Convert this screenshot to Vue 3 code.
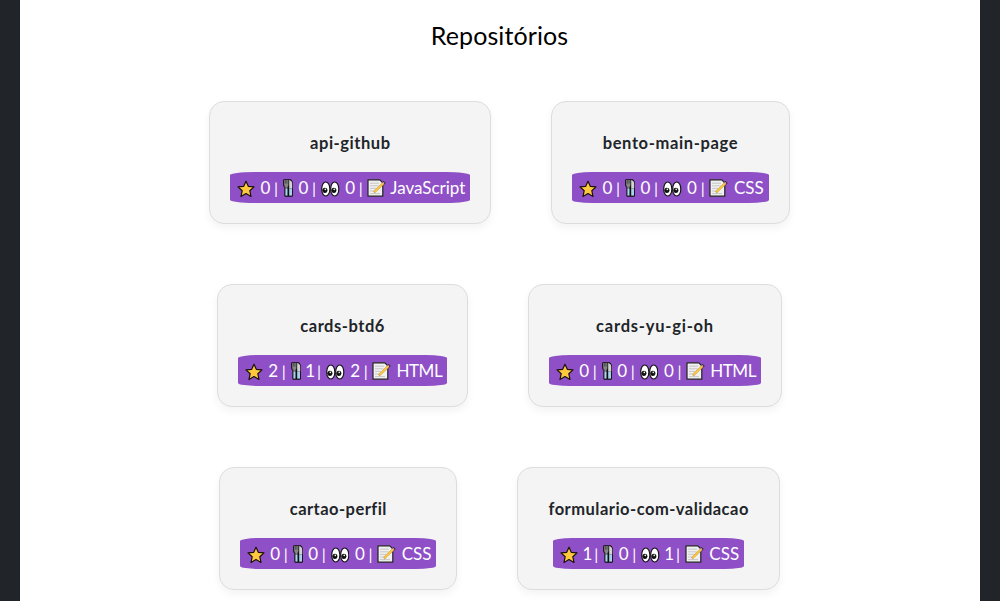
<script setup>
const repos = [
  { name: 'api-github', stars: 0, forks: 0, watchers: 0, language: 'JavaScript', tracking: 0.54 },
  { name: 'bento-main-page', stars: 0, forks: 0, watchers: 0, language: 'CSS', tracking: 0.64 },
  { name: 'cards-btd6', stars: 2, forks: 1, watchers: 2, language: 'HTML', tracking: 0.54 },
  { name: 'cards-yu-gi-oh', stars: 0, forks: 0, watchers: 0, language: 'HTML', tracking: 0.77 },
  { name: 'cartao-perfil', stars: 0, forks: 0, watchers: 0, language: 'CSS', tracking: 0.46 },
  { name: 'formulario-com-validacao', stars: 1, forks: 0, watchers: 1, language: 'CSS', tracking: 0.48 },
]
</script>

<template>
  <main class="page">
    <h2 class="heading">Repositórios</h2>
    <section class="repos">
      <article v-for="repo in repos" :key="repo.name" class="card">
        <h3 class="name" :style="{ letterSpacing: repo.tracking + 'px' }">{{ repo.name }}</h3>
        <div class="stats">
          <svg class="star" viewBox="0 0 18 18" aria-hidden="true">
            <path d="M9 1.2 11.3 6.3 17 6.9 12.8 10.7 14 16.5 9 13.6 4 16.5 5.2 10.7 1 6.9 6.7 6.3Z" fill="#ffc83d" stroke="#17120c" stroke-width="1.2" stroke-linejoin="round" />
          </svg>
          <span class="count" :class="{ thin: repo.stars === 1 }">{{ repo.stars }}</span><span class="bar">|</span>
          <svg class="fork" viewBox="0 0 10 18" aria-hidden="true">
            <path d="M.7.8H8Q9.4 2 9.4 5V17.2H1.9V8.5Q.7 7.5.7 6Z" fill="#111" stroke="#111" stroke-width="1" stroke-linejoin="round" />
            <path d="M1.2 1V6Q1.2 7.6 2.4 8V9.5H4.4V8Q5.4 7.6 5.4 6V1Z" fill="#858585" />
            <path d="M2.6 1V4.6M4 1V4.6" stroke="#222" stroke-width=".5" />
            <path d="M2.4 9.5H4.5V16.6H2.4Z" fill="#a9d3ed" />
            <path d="M6.2 1.1Q9 1.5 9.2 5V9.5H6.2Z" fill="#d3d3d3" />
            <path d="M6.2 9.5H9V16.6H6.2Z" fill="#a9d3ed" />
          </svg>
          <span class="count" :class="{ thin: repo.forks === 1 }">{{ repo.forks }}</span><span class="bar">|</span>
          <svg class="eyes" viewBox="0 0 19 16" aria-hidden="true">
            <g fill="#fff" stroke="#141414" stroke-width="1.2">
              <ellipse cx="4.9" cy="8" rx="4.2" ry="7.2" />
              <ellipse cx="14.1" cy="8" rx="4.2" ry="7.2" />
            </g>
            <circle cx="4" cy="9.4" r="2.6" fill="#111" />
            <circle cx="13.2" cy="9.4" r="2.6" fill="#111" />
            <circle cx="4.4" cy="8.4" r=".8" fill="#fff" />
            <circle cx="13.6" cy="8.4" r=".8" fill="#fff" />
          </svg>
          <span class="count" :class="{ thin: repo.watchers === 1 }">{{ repo.watchers }}</span><span class="bar">|</span>
          <svg class="memo" viewBox="0 0 19 18" aria-hidden="true">
            <path d="M1 .8H12.8L15.8 3.8V17.2H1Z" fill="#f0f0f0" stroke="#222" stroke-width="1.2" stroke-linejoin="round" />
            <path d="M3 4.2H12M3 6.8H11.5M3 9.4H9M3 12H7M3 14.6H13" stroke="#c6c6c6" stroke-width="1" />
            <path d="M15.6 3 17.7 5" stroke="#222" stroke-width="2.8" />
            <path d="M7 13.4 16.4 4.1" stroke="#c79d45" stroke-width="2.3" />
            <path d="M7.6 12.8 16 4.5" stroke="#ffc83d" stroke-width="1.7" />
            <path d="M15.9 4.6 17 3.5" stroke="#f5a0a0" stroke-width="1.6" />
          </svg>
          <span class="language" :class="repo.language.toLowerCase()">{{ repo.language }}</span>
        </div>
      </article>
    </section>
  </main>
</template>

<style>
body {
  background: #212529;
  overflow: hidden;
}
</style>

<style scoped>
.page {
  box-sizing: border-box;
  height: 601px;
  margin: 0 20px;
  padding-top: 17px;
  background: #fff;
  font-family: Lato, sans-serif;
}
.heading {
  margin: 0;
  padding-right: 1px;
  text-align: center;
  font-size: 25px;
  font-weight: 400;
  line-height: 37px;
  letter-spacing: 0.1px;
  color: #000;
}
.repos {
  display: flex;
  flex-wrap: wrap;
  justify-content: center;
  gap: 60px;
  width: 620px;
  margin: 47px auto 0;
  padding-right: 1px;
}
.card {
  box-sizing: border-box;
  display: flex;
  flex-direction: column;
  align-items: center;
  height: 123px;
  padding: 20px;
  border: 1px solid #ddd;
  border-radius: 15px;
  background: #f4f4f4;
  box-shadow: 0 4px 8px rgba(0, 0, 0, 0.05);
}
.name {
  margin: 11px 10px 18px;
  font-size: 16.5px;
  font-weight: 700;
  line-height: 21px;
  color: #212529;
  white-space: nowrap;
}
.stats {
  box-sizing: border-box;
  display: flex;
  align-items: center;
  height: 31px;
  padding: 0 4.9px 0 6.5px;
  border-radius: 10%;
  background: #8f50c7;
  color: #fff;
  font-size: 17px;
  line-height: 32px;
  white-space: nowrap;
}
.stats svg {
  display: block;
  flex: none;
}
.star {
  width: 18px;
  height: 18px;
  margin: 2px 5.1px 0 0;
}
.fork {
  width: 10px;
  height: 18px;
  margin: 1px 5.1px 0 3.8px;
}
.eyes {
  width: 18.5px;
  height: 16px;
  margin: 3px 5px 0 4.1px;
}
.memo {
  width: 19px;
  height: 18px;
  margin: 1px 4px 0 3.6px;
}
.count {
  width: 11px;
  padding-top: 1px;
  text-align: center;
}
.thin {
  width: 8.2px;
  text-indent: -0.5px;
}
.bar {
  width: 6px;
  margin-left: 2.1px;
  text-align: center;
  font-size: 16px;
}
.language {
  padding-top: 1px;
}
.css {
  padding-left: 1.7px;
}
.html {
  padding-left: 1.2px;
  letter-spacing: -0.45px;
}
</style>
